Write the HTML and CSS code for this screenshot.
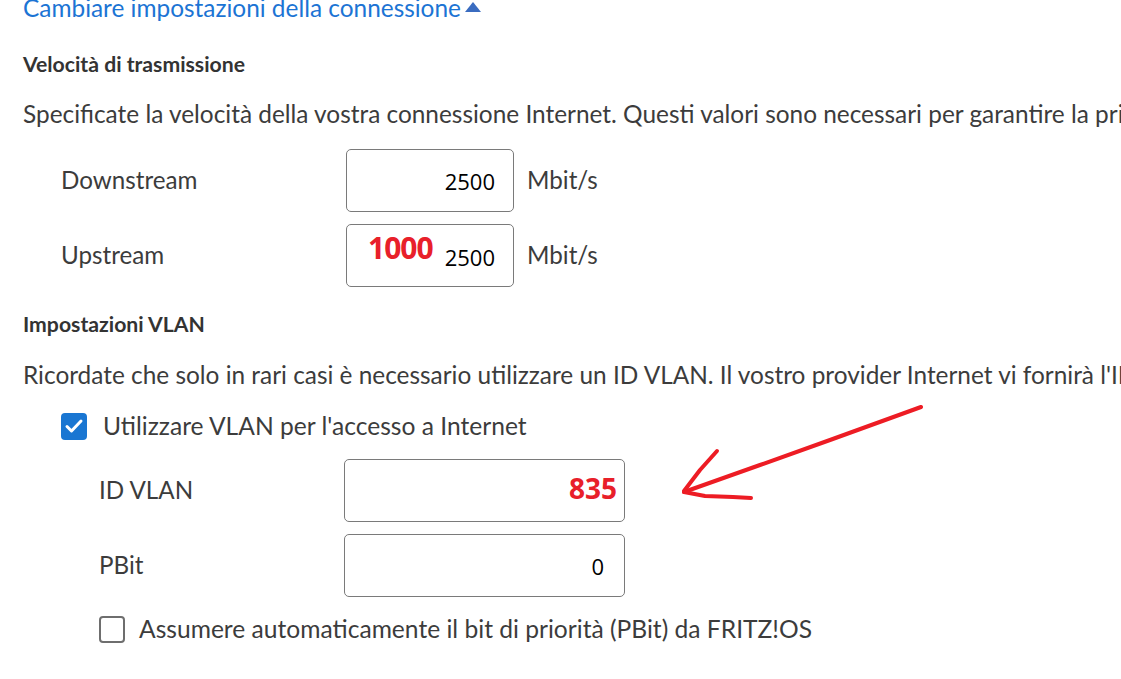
FILE: index.html
```html
<!DOCTYPE html>
<html lang="it">
<head>
<meta charset="utf-8">
<link rel="stylesheet" href="styles.css">
</head>
<body>
<div class="page">
  <a class="toggle" href="#">Cambiare impostazioni della connessione<span class="tri"></span></a>

  <h3 class="heading h-speed">Velocità di trasmissione</h3>
  <p class="text">Specificate la velocità della vostra connessione Internet. Questi valori sono necessari per garantire la priorità</p>

  <div class="form form-speed">
    <div class="row">
      <span class="label">Downstream</span>
      <div class="field"><span class="value">2500</span></div>
      <span class="unit">Mbit/s</span>
    </div>
    <div class="row">
      <span class="label">Upstream</span>
      <div class="field"><span class="note">1000</span><span class="value low">2500</span></div>
      <span class="unit">Mbit/s</span>
    </div>
  </div>

  <h3 class="heading h-vlan">Impostazioni VLAN</h3>
  <p class="text text-vlan">Ricordate che solo in rari casi è necessario utilizzare un ID VLAN. Il vostro provider Internet vi fornirà l'ID VLAN</p>

  <label class="check check-vlan">
    <span class="box checked"><svg viewBox="0 0 26 26" width="26" height="26"><path d="M6 13.5l4.5 4.5L20 8" fill="none" stroke="#fff" stroke-width="3" stroke-linecap="round" stroke-linejoin="round"/></svg></span>
    <span class="check-text">Utilizzare VLAN per l'accesso a Internet</span>
  </label>

  <div class="form form-vlan">
    <div class="row">
      <span class="label">ID VLAN</span>
      <div class="field wide red-field"><span class="value red">835</span></div>
    </div>
    <div class="row">
      <span class="label">PBit</span>
      <div class="field wide"><span class="value">0</span></div>
    </div>
  </div>

  <label class="check check-pbit">
    <span class="box"></span>
    <span class="check-text">Assumere automaticamente il bit di priorità (PBit) da FRITZ!OS</span>
  </label>
</div>

<svg class="arrow" width="1121" height="679" viewBox="0 0 1121 679">
  <g fill="none" stroke="#ed1c24" stroke-width="4" stroke-linecap="round" stroke-linejoin="round">
    <path d="M921 407 L830 440 L760 465 L684 492"/>
    <path d="M717 451 L700 470 L684 491"/>
    <path d="M684 492 L705 496 L733 497 L751 498"/>
  </g>
</svg>
</body>
</html>
```

FILE: styles.css
```css
html, body {
  margin: 0;
  padding: 0;
  background: #fff;
  overflow: hidden;
}

body {
  width: 1121px;
  height: 679px;
  position: relative;
  font-family: "Lato", "Open Sans", sans-serif;
  color: #3c3c3c;
}

.page {
  padding-left: 23px;
  margin-top: -7px;
  white-space: nowrap;
  overflow: hidden;
  width: 1121px;
  box-sizing: border-box;
}

.toggle {
  display: inline-flex;
  align-items: center;
  font-size: 24.4px;
  line-height: 30px;
  height: 30px;
  color: #1c74d4;
  text-decoration: none;
}

.tri {
  display: inline-block;
  width: 0;
  height: 0;
  margin-left: 4px;
  margin-top: -2px;
  border-left: 8px solid transparent;
  border-right: 8px solid transparent;
  border-bottom: 10px solid #3a6cc0;
}

.heading {
  margin: 0;
  font-size: 21.2px;
  font-weight: 700;
  line-height: 26px;
  color: #333;
}

.h-speed { margin-top: 28px; }
.h-vlan { margin-top: 24px; }

.text {
  margin: 22px 0 0;
  font-size: 24.4px;
  line-height: 30px;
  overflow: hidden;
}

.text-vlan { margin-top: 23px; }

.form {
  display: flex;
  flex-direction: column;
  gap: 12px;
}

.form-speed { margin-top: 20px; padding-left: 38px; }
.form-vlan { margin-top: 18px; padding-left: 76px; }

.row {
  display: flex;
  align-items: center;
}

.label {
  font-size: 24.2px;
  line-height: 30px;
  margin-top: -2px;
}

.form-speed .label { width: 285px; }
.form-vlan .label { width: 245px; }

.field {
  box-sizing: border-box;
  width: 168px;
  height: 63px;
  border: 1px solid #7a7a7a;
  border-radius: 5px;
  background: #fff;
  display: flex;
  align-items: center;
  justify-content: flex-end;
  padding-right: 18px;
  position: relative;
}

.field.wide {
  width: 281px;
  padding-right: 20px;
}

.field.red-field { padding-right: 7px; }

.value {
  font-family: "Open Sans", sans-serif;
  font-size: 22px;
  line-height: 30px;
  color: #000;
}

.value.low { margin-top: 2px; }

.value.red {
  color: #e8202a;
  font-weight: 700;
  font-size: 28px;
  margin-top: -6px;
}

.note {
  position: absolute;
  left: 21px;
  top: 3px;
  font-family: "Open Sans", sans-serif;
  font-weight: 700;
  font-size: 30px;
  line-height: 40px;
  color: #e8202a;
  letter-spacing: -1px;
}

.unit {
  margin-left: 13px;
  font-size: 24.2px;
  line-height: 30px;
  margin-top: -2px;
}

.check {
  display: flex;
  align-items: center;
  gap: 16px;
  height: 30px;
}

.check-vlan { margin-top: 21px; padding-left: 38px; }
.check-pbit { margin-top: 17px; padding-left: 76px; gap: 14px; }

.box {
  box-sizing: border-box;
  width: 26px;
  height: 27px;
  border: 2px solid #6e6e6e;
  border-radius: 4px;
  display: flex;
}

.box.checked {
  border: none;
  background: #1976d2;
}

.check-text {
  font-size: 24.6px;
  line-height: 30px;
}

.arrow {
  position: absolute;
  left: 0;
  top: 0;
  pointer-events: none;
}
```
